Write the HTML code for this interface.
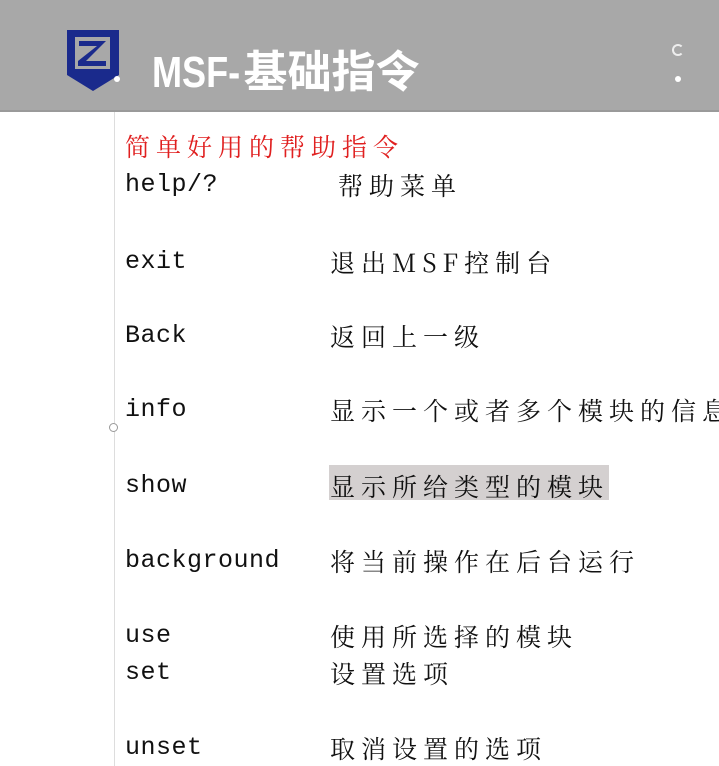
<!DOCTYPE html><html><head><meta charset="utf-8"><style>
body{margin:0;width:719px;height:766px;background:#fff;position:relative;overflow:hidden;font-family:"Liberation Sans","Noto Sans CJK SC",sans-serif}
.hd{position:absolute;left:0;top:0;width:719px;height:110px;background:#a8a8a8;border-bottom:2px solid #9a9a9a}
.t{position:absolute;left:152px;top:36px;font-size:44px;font-weight:bold;color:#fff;white-space:nowrap}
.vl{position:absolute;left:114px;top:112px;width:1px;height:654px;background:#ddd}
.r{position:absolute;font-size:25px;color:#111;line-height:30px;white-space:nowrap;font-family:"Liberation Mono",monospace;letter-spacing:0.5px}
.c{font-family:"Noto Serif CJK SC","Liberation Sans",serif;letter-spacing:6px;font-size:25px}
</style></head><body>
<div class="hd"></div>
<svg style="position:absolute;left:64px;top:27px" width="60" height="68" viewBox="0 0 60 68"><path d="M3 3H55V48L29 64 3 48Z" fill="#1a2a8c"/><path d="M11 10H46V42H11Z" fill="#a8a8a8"/><path d="M15 14H42L22 34H42V39H14V34L33 19H15Z" fill="#1a2a8c"/><circle cx="53" cy="52" r="3" fill="#fff"/></svg>
<div class="t"><span style="display:inline-block;transform:scaleX(0.82);transform-origin:left;margin-right:-16px">MSF-</span><span style="font-family:'Noto Sans CJK SC',sans-serif">基础指令</span></div>
<div style="position:absolute;left:672px;top:44px;width:8px;height:8px;border:2px solid #eee;border-radius:50%;border-right-color:transparent"></div>
<div style="position:absolute;left:675px;top:76px;width:6px;height:6px;background:#fff;border-radius:50%"></div>
<div class="vl"></div>
<div style="position:absolute;left:109px;top:423px;width:7px;height:7px;border:1px solid #999;border-radius:50%;background:#fff"></div>
<div style="position:absolute;left:329px;top:465px;width:280px;height:35px;background:#d4d0d0"></div>
<div class="r c" style="left:125px;top:131px;color:#e02020">简单好用的帮助指令</div>
<div class="r" style="left:125px;top:170px">help/?</div><div class="r c" style="left:338px;top:170px">帮助菜单</div>
<div class="r" style="left:125px;top:247px">exit</div><div class="r c" style="left:330px;top:247px">退出MSF控制台</div>
<div class="r" style="left:125px;top:321px">Back</div><div class="r c" style="left:330px;top:321px">返回上一级</div>
<div class="r" style="left:125px;top:395px">info</div><div class="r c" style="left:330px;top:395px">显示一个或者多个模块的信息</div>
<div class="r" style="left:125px;top:471px">show</div><div class="r c" style="left:330px;top:471px">显示所给类型的模块</div>
<div class="r" style="left:125px;top:546px">background</div><div class="r c" style="left:330px;top:546px">将当前操作在后台运行</div>
<div class="r" style="left:125px;top:621px">use</div><div class="r c" style="left:330px;top:621px">使用所选择的模块</div>
<div class="r" style="left:125px;top:658px">set</div><div class="r c" style="left:330px;top:658px">设置选项</div>
<div class="r" style="left:125px;top:733px">unset</div><div class="r c" style="left:330px;top:733px">取消设置的选项</div>
</body></html>
